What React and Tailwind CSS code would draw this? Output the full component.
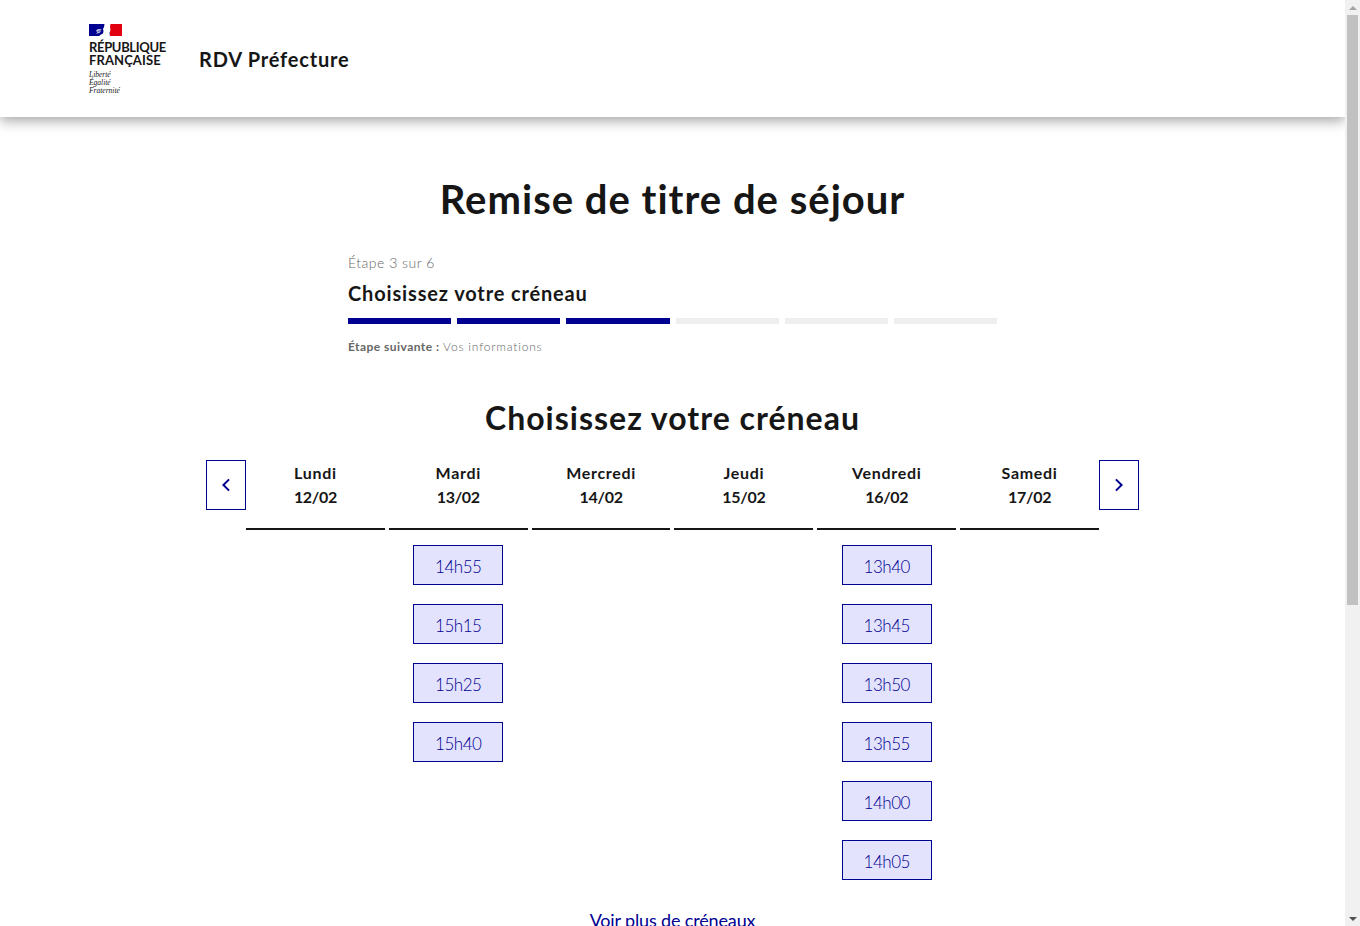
import React from "react";

const font = { fontFamily: '"Lato", "Liberation Sans", sans-serif' };

const steps = [true, true, true, false, false, false];

const days = [
  { name: "Lundi", date: "12/02", slots: [] },
  { name: "Mardi", date: "13/02", slots: ["14h55", "15h15", "15h25", "15h40"] },
  { name: "Mercredi", date: "14/02", slots: [] },
  { name: "Jeudi", date: "15/02", slots: [] },
  { name: "Vendredi", date: "16/02", slots: ["13h40", "13h45", "13h50", "13h55", "14h00", "14h05"] },
  { name: "Samedi", date: "17/02", slots: [] },
];

function Flag() {
  return (
    <svg width="33" height="12" viewBox="0 0 33 12" className="block">
      <rect width="33" height="12" fill="#000091" />
      <rect x="21" width="12" height="12" fill="#e1000f" />
      {/* profil de Marianne */}
      <path d="M10 12 L12 10.5 L14 9.5 L14.5 7 L14 5 L15 3 L15.5 0 L21.5 0 L21 3 L21.5 6 L20.5 9 L21 12 Z" fill="#fff" />
      <path d="M7 7 C8 5 10 4.5 12.5 5.5 L11.5 8 C10.5 9 8.5 9.5 7 10 L8.5 8 Z" fill="#b9b9dd" />
      <path d="M9 7.5 L12 6.5" stroke="#000091" strokeWidth="0.6" />
    </svg>
  );
}

function Chevron({ left }) {
  return (
    <svg width="24" height="24" viewBox="0 0 24 24" fill="#000091">
      {left ? (
        <path d="M10.828 12l4.95 4.95-1.414 1.414L8 12l6.364-6.364 1.414 1.414z" />
      ) : (
        <path d="M13.172 12l-4.95-4.95 1.414-1.414L16 12l-6.364 6.364-1.414-1.414z" />
      )}
    </svg>
  );
}

function Scrollbar() {
  return (
    <div className="w-[15px] h-full shrink-0 bg-[#f1f1f1] flex flex-col items-center">
      <div className="h-[15px] w-full flex items-center justify-center">
        <div className="w-0 h-0 border-x-[4px] border-x-transparent border-b-[4px] border-b-[#a3a3a3]" />
      </div>
      <div className="w-[11px] h-[590px] bg-[#c1c1c1]" />
      <div className="flex-1" />
      <div className="h-[15px] w-full flex items-center justify-center">
        <div className="w-0 h-0 border-x-[4px] border-x-transparent border-t-[4px] border-t-[#505050]" />
      </div>
    </div>
  );
}

export default function App() {
  return (
    <div className="h-[926px] overflow-hidden flex bg-white text-[#161616]" style={font}>
      <div className="flex-1 min-w-0 overflow-hidden">
        {/* Header */}
        <header className="h-[117px] shadow-[0_4px_12px_rgba(0,0,0,0.35)] pl-[89px] flex items-start relative">
          <div className="pt-[24px] w-[110px]">
            <Flag />
            <p className="mt-[5px] text-[13px] leading-[13px] font-bold text-[#161616] whitespace-nowrap">
              <span className="tracking-[-0.35px]">RÉPUBLIQUE</span>
              <br />
              <span className="tracking-[0.1px]">FRANÇAISE</span>
            </p>
            <p className="mt-[4px] text-[7.5px] leading-[8px] italic text-[#161616]" style={{ fontFamily: '"Liberation Serif", serif' }}>
              Liberté
              <br />
              Égalité
              <br />
              Fraternité
            </p>
          </div>
          <p className="mt-[45px] text-[20px] leading-[28px] font-bold tracking-[0.8px] whitespace-nowrap">RDV Préfecture</p>
        </header>

        <main className="flex flex-col items-center">
          <h1 className="mt-[56px] text-[40px] leading-[52px] font-bold tracking-[1px]">Remise de titre de séjour</h1>

          {/* Stepper */}
          <div className="mt-[26px] w-[649px]">
            <p className="text-[14px] leading-[24px] font-light tracking-[0.5px] text-[#666]">Étape 3 sur 6</p>
            <h2 className="mt-[4px] text-[20px] leading-[28px] font-bold tracking-[0.85px]">Choisissez votre créneau</h2>
            <div className="mt-[11px] flex gap-[6px]">
              {steps.map((on, i) => (
                <div key={i} className={`h-[6px] flex-1 ${on ? "bg-[#000091]" : "bg-[#eeeeee]"}`} />
              ))}
            </div>
            <p className="mt-[13px] text-[12px] leading-[20px] font-light tracking-[0.8px] text-[#666]">
              <span className="font-bold tracking-[0.45px]">Étape suivante :</span> Vos informations
            </p>
          </div>

          <h2 className="mt-[41px] text-[32px] leading-[40px] font-bold tracking-[1px]">Choisissez votre créneau</h2>

          {/* Calendar */}
          <div className="mt-[22px] flex items-start">
            <button className="w-[40px] h-[50px] border border-[#000091] flex items-center justify-center">
              <Chevron left />
            </button>
            <div className="w-[853px] grid grid-cols-6 gap-x-[4px]">
              {days.map((d) => (
                <div key={d.name} className="flex flex-col items-center">
                  <div className="w-full h-[70px] border-b-2 border-[#161616] text-center text-[16px] leading-[24px] font-bold pt-px">
                    <span className="tracking-[0.7px]">{d.name}</span>
                    <br />
                    <span className="tracking-[-0.3px]">{d.date}</span>
                  </div>
                  <div className="mt-[15px] flex flex-col gap-[19px]">
                    {d.slots.map((s) => (
                      <button key={s} className="w-[90px] h-[40px] pt-[4px] bg-[#e3e3fd] border border-[#000091] text-[17px] font-light tracking-[-0.5px] text-[#000091]">
                        {s}
                      </button>
                    ))}
                  </div>
                </div>
              ))}
            </div>
            <button className="w-[40px] h-[50px] border border-[#000091] flex items-center justify-center">
              <Chevron />
            </button>
          </div>

          <a href="#" className="mt-[28px] text-[18px] leading-[24px] tracking-[-0.15px] text-[#000091] underline">
            Voir plus de créneaux
          </a>
        </main>
      </div>
      <Scrollbar />
    </div>
  );
}
